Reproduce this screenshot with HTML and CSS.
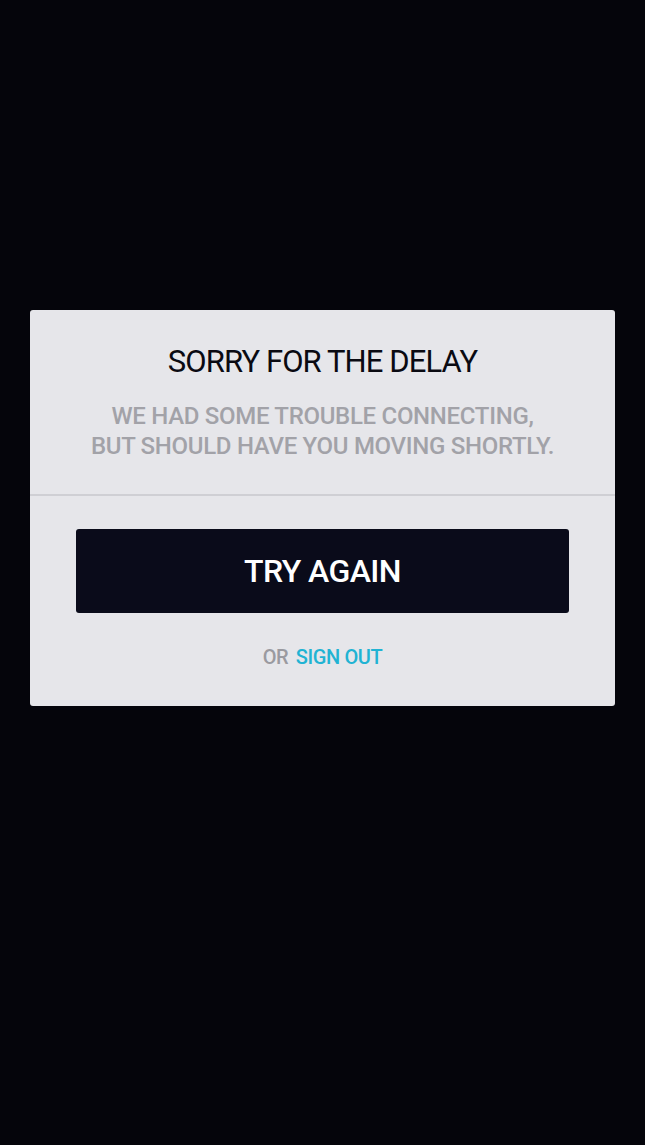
FILE: index.html
```html
<!DOCTYPE html>
<html lang="en">
<head>
    <meta charset="UTF-8">
    <meta name="viewport" content="width=device-width, initial-scale=1.0">
    <title>Sorry for the delay</title>
    <link rel="stylesheet" href="styles.css">
</head>
<body>
    <div class="screen">
        <div class="dialog">
            <div class="dialog-head">
                <h1 class="dialog-title">SORRY FOR THE DELAY</h1>
                <p class="dialog-text">WE HAD SOME TROUBLE CONNECTING,<br>BUT SHOULD HAVE YOU MOVING SHORTLY.</p>
            </div>
            <div class="dialog-body">
                <button class="retry-btn">TRY AGAIN</button>
                <p class="alt-action">OR <a href="#" class="sign-out">SIGN OUT</a></p>
            </div>
        </div>
    </div>
</body>
</html>
```

FILE: styles.css
```css
html, body {
    margin: 0;
    padding: 0;
    background-color: #05050b;
}
body {
    font-family: 'Roboto', 'Liberation Sans', sans-serif;
}
.screen {
    height: 1145px;
    padding: 310px 30px 0;
    box-sizing: border-box;
}
.dialog {
    width: 585px;
    background-color: #e6e6ea;
    border-radius: 3px;
}
.dialog-head {
    padding: 31px 20px 33px;
    text-align: center;
    border-bottom: 2px solid #cfcfd4;
}
.dialog-title {
    margin: 0;
    font-size: 31px;
    font-weight: 400;
    color: #0a0a12;
    line-height: 42px;
    letter-spacing: -0.9px;
}
.dialog-text {
    margin: 18px 0 0;
    font-size: 24px;
    font-weight: 500;
    color: #a2a2a8;
    line-height: 30px;
    letter-spacing: -0.3px;
}
.dialog-body {
    padding: 33px 46px 35px;
    text-align: center;
}
.retry-btn {
    display: block;
    width: 100%;
    height: 84px;
    background-color: #0a0b1a;
    color: #ffffff;
    border: none;
    border-radius: 3px;
    font-family: inherit;
    font-size: 32px;
    font-weight: 500;
    letter-spacing: -0.6px;
    cursor: pointer;
}
.alt-action {
    margin: 30px 0 0;
    font-size: 20px;
    font-weight: 500;
    color: #9a9aa0;
    line-height: 28px;
    letter-spacing: -0.4px;
}
.sign-out {
    color: #21b3d3;
    text-decoration: none;
    margin-left: 3px;
}
```
